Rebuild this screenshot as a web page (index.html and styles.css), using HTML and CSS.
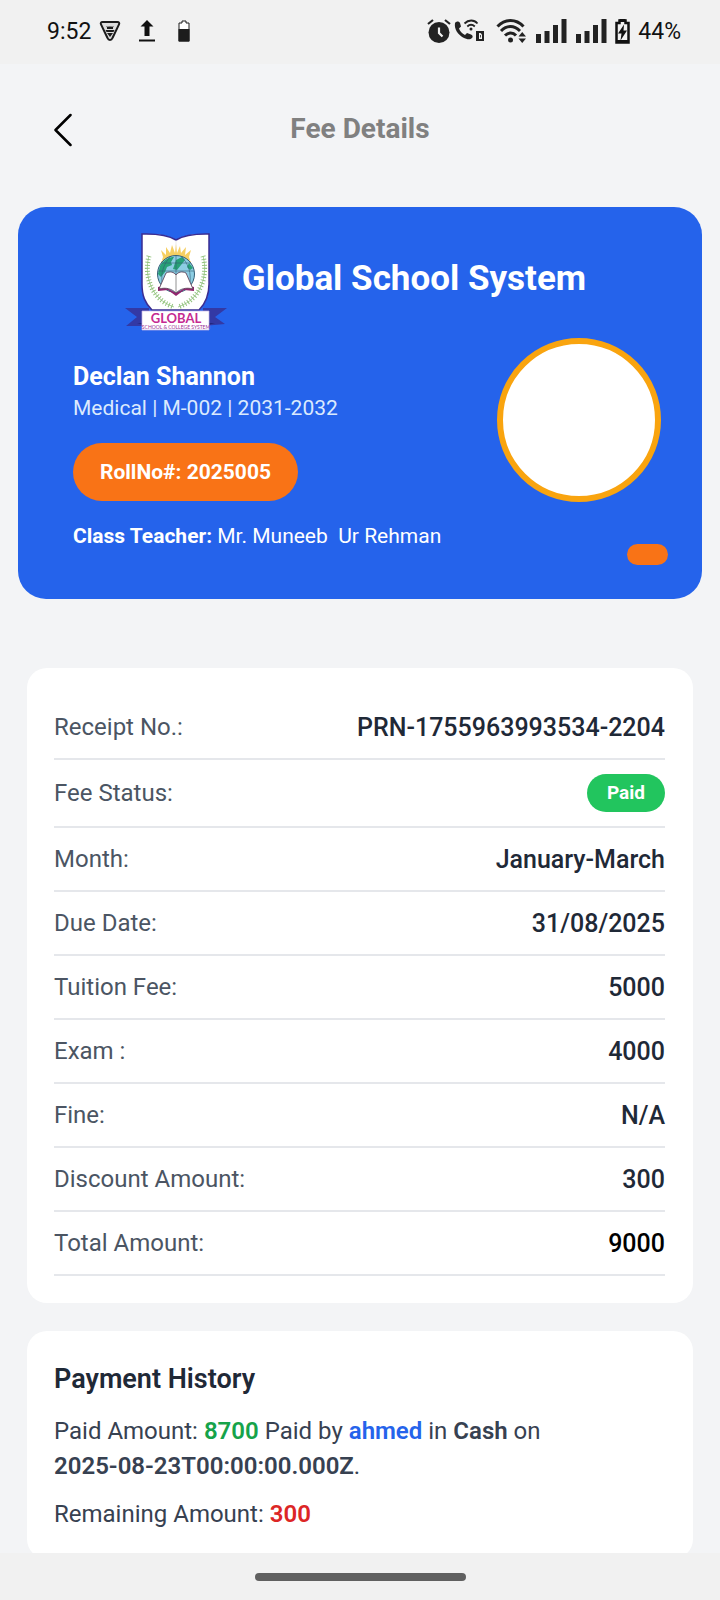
FILE: index.html
```html
<!DOCTYPE html>
<html lang="en">
<head>
    <meta charset="UTF-8">
    <meta name="viewport" content="width=device-width, initial-scale=1.0">
    <title>Fee Details</title>
    <link rel="stylesheet" href="styles.css">
</head>
<body>

    <div class="status-bar">
        <div class="status-left">
            <span>9:52</span>
            <svg class="icon-shield" width="22" height="22" viewBox="0 0 22 22">
                <path d="M3.500 2h15c1.500 0 2.200 1 1.500 2.400l-6.500 13.600c-1 2.500-4 2.500-5 0l-6.500-13.600C1.300 3 2 2 3.500 2z" fill="#ddd" stroke="#1c1c1c" stroke-width="2"/>
                <path d="M8 7.500l-.8-1.500 1.500.8c1.500-.5 3-.5 4.600 0l1.500-.8-.8 1.500v1.500H8zM6.500 10h9l-1 2h-7zM8 13h6l-3 4z" fill="#1c1c1c"/>
            </svg>
            <svg class="icon-upload" width="18" height="22" viewBox="0 0 18 22">
                <path d="M9 0l6.500 6.500H11.500V16h-5V6.500H2.500z" fill="#111"/>
                <path d="M1 20.500h16" stroke="#111" stroke-width="2"/>
            </svg>
            <svg class="icon-battery-small" width="12" height="22" viewBox="0 0 12 22">
                <path d="M1 3h3V1h4v2h3v18H1z" fill="#fff" stroke="#1c1c1c" stroke-width="1"/>
                <path d="M0.500 9h11v12.500h-11z" fill="#1c1c1c"/>
            </svg>
        </div>
        <div class="status-right">
            <svg width="24" height="24" viewBox="0 0 24 24">
                <circle cx="12" cy="13.500" r="10.500" fill="#222"/>
                <path d="M1 5l5-4M23 5l-5-4" stroke="#222" stroke-width="2.200"/>
                <path d="M12 8.500v5.500l3.500 3.500" fill="none" stroke="#f1f1f1" stroke-width="2.200"/>
            </svg>
            <svg class="icon-call" width="31" height="24" viewBox="0 0 31 24">
                <path d="M1 4c1.500-2 4-2 5 0l1 3.500-2 2c1 3 3 5 6 6.500l2-2 4 1.500c2 1 2 2.500 1 3.500-2 2-5 1.500-9-.5C4 15.500 0 10 1 4z" fill="#222"/>
                <path d="M10.500 4.500c4-4 9.500-4 13 0M13.300 7.500c2.300-2.200 5.200-2.200 7.500 0" fill="none" stroke="#222" stroke-width="1.800"/>
                <circle cx="17" cy="10" r="1.500" fill="#222"/>
                <path d="M22 12h8v10h-8z" fill="#222"/>
                <path d="M25 14h1.500l1.500 1.500v4.500h-3z" fill="#f1f1f1"/>
                <path d="M26.500 16v2.500" stroke="#222" stroke-width=".8"/>
            </svg>
            <svg class="icon-wifi" width="31" height="24" viewBox="0 0 31 24">
                <g fill="none" stroke="#222" stroke-width="3">
                    <path d="M1.500 7.500C9-.5 20-.5 27.500 7.500"/>
                    <path d="M5 12c6-6 13-6 19 0"/>
                    <path d="M9 16.500c3.500-3.500 8-3.500 11 0"/>
                </g>
                <circle cx="14.500" cy="21" r="2.500" fill="#222"/>
                <path d="M22.500 17.500l3.700-4.500 3.800 4.500zM22.500 19.500h7.500l-3.800 4.500z" fill="#222"/>
            </svg>
            <svg class="icon-signal" width="31" height="24" viewBox="0 0 31 24">
                <path d="M0 15h5v9h-5zM8.500 12h5v12h-5zM17 6h5v18h-5zM25.500 0h5v24h-5z" fill="#222"/>
            </svg>
            <svg class="icon-signal" width="31" height="24" viewBox="0 0 31 24">
                <path d="M0 15h5v9h-5zM8.500 12h5v12h-5zM17 6h5v18h-5zM25.500 0h5v24h-5z" fill="#222"/>
            </svg>
            <svg class="icon-battery" width="15" height="25" viewBox="0 0 15 25">
                <path d="M1.500 4h3V1.500h6V4h3v19.500h-12z" fill="#f1f1f1" stroke="#111" stroke-width="2.500"/>
                <path d="M4.500 0h6v3h-6zM1 21h13v3H1z" fill="#111"/>
                <path d="M9 5.500L3 14.500h3.500L5.500 21.500l6.500-10H8.500z" fill="#111"/>
            </svg>
            <span>44%</span>
        </div>
    </div>

    <main class="content">
        <header class="page-header">
            <button class="back-button" type="button" aria-label="Back">
                <svg width="18" height="34" viewBox="0 0 18 34">
                    <path d="M16.500 2L1.500 17l15 15" fill="none" stroke="#000" stroke-width="2.500" stroke-linecap="round" stroke-linejoin="round"/>
                </svg>
            </button>
            <h1 class="page-title">Fee Details</h1>
        </header>

        <section class="student-card">
            <div class="school">
                <svg class="school-logo" width="102" height="100" viewBox="0 0 102 100">
                    <!-- ribbon ends -->
                    <path d="M0 76h24v18H1l11-9zM102 76H78v18l22-2-10-7z" fill="#3339a5"/>
                    <path d="M12 91h10v3zM90 91H80v3z" fill="#23277e"/>
                    <!-- shield -->
                    <path d="M17 2h4c13 0 22 1 30 6 8-5 17-6 30-6h3v50c0 13-4 20-10 26H27c-7-7-10-14-10-26z" fill="#fff" stroke="#3a2c91" stroke-width="1.500"/>
                    <path d="M51 8v10" stroke="#ddd" stroke-width=".6"/>
                    <!-- sun -->
                    <path d="M37 28l1-3-2-7 5 5 0-8 4 6 2-8 3 8 1-9 1 9 3-7 1 7 5-6-1 8 6-5-2 7 1 3z" fill="#f6cf62"/>
                    <path d="M36 30c7-8 23-8 30 0z" fill="#f3bd3b"/>
                    <!-- globe -->
                    <circle cx="51" cy="42" r="18.500" fill="#8ccde3" stroke="#335e76" stroke-width="1"/>
                    <path d="M35 34c4-7 10-9 14-9l-3 5 1 3-5 2-2 5-4 5-3-3zM51 28l6-3 3 3-4 5-4 5-4-1zM64 31l4 5-3 2-3-3z" fill="#27a177"/>
                    <path d="M51 24v20M33 39h36M36 31h30M45 25c-7 8-9 16-8 26M57 25c7 8 9 16 8 26" fill="none" stroke="#335e76" stroke-width=".6"/>
                    <!-- book -->
                    <path d="M33 55l5-1 13 7 13-7 5 1v4l-10-1-8 6-8-6-10 1z" fill="#92266f"/>
                    <path d="M41 41c4-2 8-1 10 2 2-3 6-4 10-2l7 16c-7-2-13 0-17 4-4-4-10-6-17-4z" fill="#fff" stroke="#54374e" stroke-width=".8"/>
                    <path d="M51 43v18" stroke="#777" stroke-width=".8"/>
                    <!-- laurel -->
                    <g fill="none" stroke="#93c37e">
                        <path d="M24 24c-5 18 1 43 25 51M78 24c5 18-1 43-25 51" stroke-width=".8"/>
                        <path d="M24 24c-5 18 1 43 25 51M78 24c5 18-1 43-25 51" stroke-width="5" stroke-dasharray="1 2"/>
                    </g>
                    <!-- name plate -->
                    <path d="M17 79h67v19H17z" fill="#fff" stroke="#c6b5e8" stroke-width=".7"/>
                    <text class="logo-name" x="51" y="91" text-anchor="middle">GLOBAL</text>
                    <text class="logo-sub" x="51" y="97" text-anchor="middle">SCHOOL &amp; COLLEGE SYSTEM</text>
                </svg>
                <h2 class="school-name">Global School System</h2>
            </div>

            <div class="student">
                <div class="student-info">
                    <p class="student-name">Declan Shannon</p>
                    <p class="student-class">Medical | M-002 | 2031-2032</p>
                    <span class="roll-number">RollNo#: 2025005</span>
                    <p class="teacher"><b>Class Teacher:</b> Mr. Muneeb&nbsp; Ur Rehman</p>
                </div>
                <div class="student-side">
                    <div class="avatar"></div>
                    <span class="tag"></span>
                </div>
            </div>
        </section>

        <dl class="panel fee-list">
            <div class="fee-row">
                <dt>Receipt No.:</dt>
                <dd>PRN-1755963993534-2204</dd>
            </div>
            <div class="fee-row fee-row-status">
                <dt>Fee Status:</dt>
                <dd class="badge-paid">Paid</dd>
            </div>
            <div class="fee-row">
                <dt>Month:</dt>
                <dd>January-March</dd>
            </div>
            <div class="fee-row">
                <dt>Due Date:</dt>
                <dd>31/08/2025</dd>
            </div>
            <div class="fee-row">
                <dt>Tuition Fee:</dt>
                <dd>5000</dd>
            </div>
            <div class="fee-row">
                <dt>Exam :</dt>
                <dd>4000</dd>
            </div>
            <div class="fee-row">
                <dt>Fine:</dt>
                <dd>N/A</dd>
            </div>
            <div class="fee-row">
                <dt>Discount Amount:</dt>
                <dd>300</dd>
            </div>
            <div class="fee-row">
                <dt>Total Amount:</dt>
                <dd class="total">9000</dd>
            </div>
        </dl>

        <section class="panel history">
            <h2 class="history-title">Payment History</h2>
            <p>Paid Amount: <b class="green">8700</b> Paid by <b class="blue">ahmed</b> in <b>Cash</b> on <b class="date">2025-08-23T00:00:00.000Z</b>.</p>
            <p>Remaining Amount: <b class="red">300</b></p>
        </section>
    </main>

    <div class="nav-bar">
        <span class="nav-handle"></span>
    </div>

</body>
</html>
```
FILE: styles.css
```css
* {
    box-sizing: border-box;
}
body {
    margin: 0;
    height: 100vh;
    display: flex;
    flex-direction: column;
    font-family: Roboto, "Liberation Sans", sans-serif;
    background-color: #f3f4f6;
    color: #1f2937;
}
h1, h2, p, dl, dd {
    margin: 0;
}
svg {
    display: block;
    flex-shrink: 0;
}

/* Status bar */
.status-bar {
    display: flex;
    justify-content: space-between;
    align-items: center;
    flex-shrink: 0;
    height: 64px;
    padding: 0 39px 2px 47px;
    background-color: #f1f1f1;
    color: #111;
    font-size: 23px;
}
.status-left,
.status-right {
    display: flex;
    align-items: center;
}
.icon-shield {
    margin-left: 8px;
}
.icon-upload {
    margin-left: 17px;
}
.icon-battery-small {
    margin-left: 22px;
}
.icon-call {
    margin-left: 3px;
}
.icon-wifi {
    margin-left: 11px;
}
.icon-signal {
    margin-left: 9px;
}
.icon-battery {
    margin: 0 8px;
}

/* Page */
.content {
    flex: 1;
    min-height: 0;
    overflow-y: auto;
    scrollbar-width: none;
}
.page-header {
    display: grid;
    grid-template-columns: 56px 1fr 56px;
    align-items: center;
    height: 128px;
    padding: 4px 35px 0;
}
.back-button {
    display: flex;
    padding: 0 19px;
    border: none;
    background: none;
    cursor: pointer;
}
.page-title {
    padding-bottom: 2px;
    font-size: 28px;
    line-height: 36px;
    text-align: center;
    color: #808080;
}

/* Student card */
.student-card {
    margin: 15px 18px 0;
    padding: 25px 34px 34px 55px;
    border-radius: 28px;
    background-color: #2563eb;
    color: #fff;
}
.school {
    display: flex;
    justify-content: center;
    align-items: center;
    gap: 15px;
    padding-right: 30px;
}
.school-name {
    font-size: 35px;
    line-height: 44px;
    padding-bottom: 6px;
}
.logo-name {
    font: bold 13px Lato, sans-serif;
    fill: #c52a91;
}
.logo-sub {
    font: 5px Lato, sans-serif;
    fill: #9b3195;
}
.student {
    display: flex;
    justify-content: space-between;
}
.student-info {
    padding: 29px 0 14px;
}
.student-name {
    font-size: 25px;
    font-weight: bold;
    line-height: 32px;
}
.student-class {
    font-size: 21px;
    line-height: 30px;
    color: #dbeafe;
}
.roll-number {
    display: inline-block;
    margin: 20px 0;
    padding: 0 27px;
    border-radius: 29px;
    background-color: #f97316;
    font-size: 21px;
    font-weight: bold;
    line-height: 58px;
}
.teacher {
    font-size: 21px;
    line-height: 30px;
}
.student-side {
    display: flex;
    flex-direction: column;
    align-items: flex-end;
    justify-content: space-between;
    padding-top: 6px;
}
.avatar {
    width: 164px;
    height: 164px;
    margin-right: 7px;
    border: 6px solid #f9a40f;
    border-radius: 50%;
    background-color: #fff;
}
.tag {
    width: 41px;
    height: 21px;
    border-radius: 11px;
    background-color: #f97316;
}

/* White panels */
.panel {
    margin: 28px 27px 0;
    padding: 27px;
    border-radius: 20px;
    background-color: #fff;
}
.fee-list {
    margin-top: 69px;
    padding: 28px 28px 27px 27px;
}
.fee-row {
    display: flex;
    justify-content: space-between;
    align-items: center;
    height: 64px;
    border-bottom: 2px solid #e5e7eb;
    font-size: 24px;
}
.fee-row-status {
    height: 68px;
}
.fee-row dt {
    color: #4b5563;
}
.fee-row dd {
    font-size: 25px;
    font-weight: 500;
}
.fee-row .total {
    color: #000;
}
.fee-row .badge-paid {
    padding: 0 20px;
    border-radius: 19px;
    background-color: #22c55e;
    color: #fff;
    font-size: 19px;
    font-weight: bold;
    line-height: 38px;
}
.history {
    font-size: 24px;
    line-height: 35px;
    color: #374151;
}
.history p {
    margin-top: 13px;
}
.history b {
    font-weight: 600;
}
.history .date {
    display: inline-block;
}
.history-title {
    font-size: 27px;
    font-weight: 600;
    line-height: 43px;
    color: #1f2937;
}
.history .green {
    color: #16a34a;
}
.history .blue {
    color: #2563eb;
}
.history .red {
    color: #dc2626;
}

/* Navigation bar */
.nav-bar {
    display: flex;
    justify-content: center;
    align-items: center;
    flex-shrink: 0;
    height: 47px;
    background-color: #f1f1f1;
}
.nav-handle {
    width: 211px;
    height: 8px;
    border-radius: 4px;
    background-color: #606060;
}
```
